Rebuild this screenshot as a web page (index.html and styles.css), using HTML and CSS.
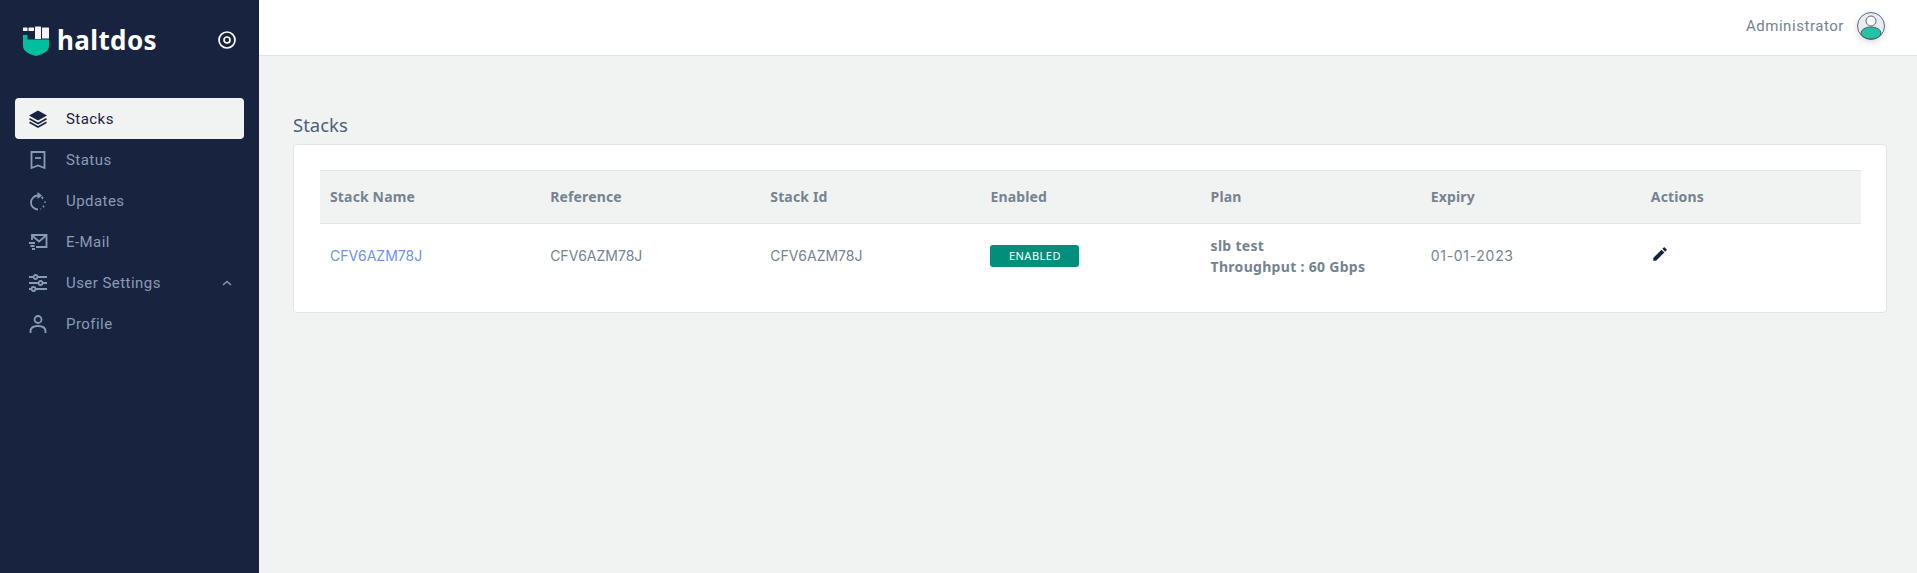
FILE: index.html
```html
<!DOCTYPE html>
<html lang="en">
<head>
    <meta charset="UTF-8">
    <title>Stacks</title>
    <link rel="stylesheet" href="styles.css">
</head>
<body>
    <aside class="sidebar">
        <div class="brand">
            <svg class="brand-logo" viewBox="0 0 28 32" width="28" height="32">
                <path fill="#00bfa0" d="M1 11h4.500v4.500H27V22c0 5-6 8.500-13 10C7 30.500 1 27 1 22z"/>
                <rect fill="#f4f4f4" x="1" y="3.500" width="4.500" height="3.500" rx="0.500"/>
                <rect fill="#f4f4f4" x="6.500" y="3.500" width="5.500" height="3.500" rx="0.500"/>
                <rect fill="#f4f4f4" x="13" y="2.500" width="6" height="12.500" rx="0.500"/>
                <rect fill="#f4f4f4" x="20" y="3.500" width="7" height="11" rx="0.500"/>
            </svg>
            <span class="brand-name">haltdos</span>
            <svg class="brand-toggle" viewBox="0 0 20 20" width="20" height="20">
                <circle cx="10" cy="10" r="8" fill="none" stroke="#fff" stroke-width="1.700"/>
                <circle cx="10" cy="10" r="3" fill="none" stroke="#fff" stroke-width="1.700"/>
            </svg>
        </div>
        <nav class="menu">
            <a class="menu-item active">
                <svg viewBox="0 0 20 20" width="20" height="20">
                    <path fill="#18233f" d="M10 1.500 19 6.500 10 11.500 1 6.500z"/>
                    <path fill="none" stroke="#18233f" stroke-width="1.600" d="M1.500 9.800 10 14.500l8.500-4.700M1.500 13.300 10 18l8.500-4.700"/>
                </svg>
                <span>Stacks</span>
            </a>
            <a class="menu-item">
                <svg viewBox="0 0 20 20" width="20" height="20" class="line-icon">
                    <path d="M3.500 2h13v16L10 15.500 3.500 18z"/>
                    <path d="M7 8h6"/>
                </svg>
                <span>Status</span>
            </a>
            <a class="menu-item">
                <svg viewBox="0 0 20 20" width="20" height="20" class="line-icon">
                    <path d="M10 4.500a7 7 0 1 0 0 14"/>
                    <path d="M13.500 6 15 7.500M17 10.500v1.200M16 15l-1 1M13 18l-.5.200"/>
                    <path class="solid" d="M9.500 1 14 4.500 9.500 8z"/>
                </svg>
                <span>Updates</span>
            </a>
            <a class="menu-item">
                <svg viewBox="0 0 20 20" width="20" height="20" class="line-icon">
                    <path d="M4 8V3h14.500v12H8"/>
                    <path d="M4 3.500 11 9.500l7-6"/>
                    <path d="M1 11h6M2.500 14h4M4 17h3"/>
                </svg>
                <span>E-Mail</span>
            </a>
            <a class="menu-item">
                <svg viewBox="0 0 20 20" width="20" height="20" class="line-icon">
                    <path d="M1 4h4.500M9.500 4H19M1 10h9.500M14.500 10H19M1 16h2.500M7.500 16H19"/>
                    <circle cx="7.500" cy="4" r="2"/>
                    <circle cx="12.500" cy="10" r="2"/>
                    <circle cx="5.500" cy="16" r="2"/>
                </svg>
                <span>User Settings</span>
                <svg class="menu-caret" viewBox="0 0 10 6" width="10" height="6">
                    <path d="M1 5 5 1.500 9 5" fill="none" stroke="#8a9bb4" stroke-width="1.400"/>
                </svg>
            </a>
            <a class="menu-item">
                <svg viewBox="0 0 20 20" width="20" height="20" class="line-icon">
                    <circle cx="10" cy="5.500" r="3.500"/>
                    <path d="M2.500 19v-1.500c0-3.500 3-5.500 7.500-5.500s7.500 2 7.500 5.500V19"/>
                </svg>
                <span>Profile</span>
            </a>
        </nav>
    </aside>

    <div class="main">
        <header class="topbar">
            <span class="user-name">Administrator</span>
            <svg class="avatar" viewBox="0 0 30 30" width="30" height="30">
                <circle cx="15" cy="15" r="13.500" fill="#e9ecef" stroke="#5c6b80" stroke-width="1"/>
                <circle cx="15" cy="10" r="5" fill="#fff" stroke="#5c6b80" stroke-width="1"/>
                <ellipse cx="15" cy="22" rx="10" ry="6" fill="#26c2a4" stroke="#4b5a6e" stroke-width="1"/>
            </svg>
        </header>

        <section class="content">
            <h1 class="page-title">Stacks</h1>
            <div class="card">
                <table class="stack-table">
                    <thead>
                        <tr>
                            <th>Stack Name</th>
                            <th>Reference</th>
                            <th>Stack Id</th>
                            <th>Enabled</th>
                            <th>Plan</th>
                            <th>Expiry</th>
                            <th>Actions</th>
                        </tr>
                    </thead>
                    <tbody>
                        <tr>
                            <td><a class="stack-link">CFV6AZM78J</a></td>
                            <td>CFV6AZM78J</td>
                            <td>CFV6AZM78J</td>
                            <td><span class="badge">ENABLED</span></td>
                            <td class="plan">slb test<br>Throughput : 60 Gbps</td>
                            <td class="expiry">01-01-2023</td>
                            <td>
                                <svg viewBox="0 0 24 24" width="18" height="18">
                                    <path fill="#18233f" d="M3 17.250V21h3.750L17.810 9.940l-3.750-3.750L3 17.250zM20.710 7.040a1 1 0 0 0 0-1.410l-2.340-2.340a1 1 0 0 0-1.410 0l-1.830 1.830 3.750 3.750 1.830-1.830z"/>
                                </svg>
                            </td>
                        </tr>
                    </tbody>
                </table>
            </div>
        </section>
    </div>
</body>
</html>
```

FILE: styles.css
```css
* {
    margin: 0;
    padding: 0;
    box-sizing: border-box;
}

body {
    display: flex;
    min-height: 100vh;
    background: #f1f3f3;
    font-family: 'Roboto', sans-serif;
    overflow: hidden;
}

.sidebar {
    width: 259px;
    flex-shrink: 0;
    background: #18233f;
    padding: 0 15px;
}

.brand {
    display: flex;
    align-items: center;
    height: 98px;
    padding: 0 7px 18px 7px;
}

.brand-logo {
    margin-right: 7px;
}

.brand-name {
    color: #fff;
    font-family: 'Noto Sans', sans-serif;
    font-size: 26px;
    font-weight: 700;
    letter-spacing: 0.4px;
}

.brand-toggle {
    margin-left: auto;
}

.menu-item {
    display: flex;
    align-items: center;
    gap: 18px;
    height: 41px;
    padding: 0 12px 0 13px;
    border-radius: 4px;
    color: #8a9bb4;
    font-size: 15px;
    letter-spacing: 0.45px;
}

.menu-item.active {
    background: #f1f3f3;
    color: #18233f;
}

.menu-caret {
    margin-left: auto;
}

.line-icon {
    fill: none;
    stroke: #8a9bb4;
    stroke-width: 1.8;
}

.line-icon .solid {
    fill: #8a9bb4;
    stroke: none;
}

.main {
    flex-grow: 1;
    min-width: 0;
}

.topbar {
    display: flex;
    align-items: center;
    justify-content: flex-end;
    gap: 12px;
    height: 56px;
    padding: 0 31px 4px 0;
    background: #fff;
    border-bottom: 1px solid #e2e5e8;
}

.user-name {
    color: #76838f;
    font-size: 15px;
    letter-spacing: 0.55px;
}

.avatar {
    filter: drop-shadow(0 2px 3px rgba(0, 0, 0, 0.15));
}

.content {
    padding: 58px 30px 0 34px;
}

.page-title {
    color: #4d5f78;
    font-family: 'Noto Sans', sans-serif;
    font-size: 18.500px;
    font-weight: 400;
    line-height: 22px;
    margin-bottom: 8px;
}

.card {
    background: #fff;
    border: 1px solid #e2e5e8;
    border-radius: 4px;
    padding: 25px 25px 26px 26px;
}

.stack-table {
    width: 100%;
    table-layout: fixed;
    border-collapse: collapse;
    font-family: 'Inter', sans-serif;
    font-size: 14px;
    color: #76838f;
}

.stack-table th,
.stack-table td {
    width: 220px;
    padding: 0 10px;
    text-align: left;
    vertical-align: top;
}

.stack-table th {
    height: 52px;
    line-height: 52px;
    font-family: 'Noto Sans', sans-serif;
    font-weight: 700;
    letter-spacing: 0.15px;
    background: #f1f3f3;
    border-top: 1px solid #e2e5e8;
    border-bottom: 1px solid #e2e5e8;
}

.stack-table td {
    height: 62px;
    padding-top: 21px;
    line-height: 21px;
}

.stack-link {
    color: #6b93f0;
}

.badge {
    display: block;
    width: 89px;
    height: 22px;
    background: #008f7a;
    border-radius: 3px;
    color: #fff;
    font-family: 'Noto Sans', sans-serif;
    font-size: 11px;
    line-height: 22px;
    text-align: center;
    letter-spacing: 0.5px;
}

.stack-table td.plan {
    font-family: 'Noto Sans', sans-serif;
    font-weight: 700;
    letter-spacing: 0.3px;
    padding-top: 11px;
}

.stack-table td.expiry {
    letter-spacing: 0.7px;
}
```
